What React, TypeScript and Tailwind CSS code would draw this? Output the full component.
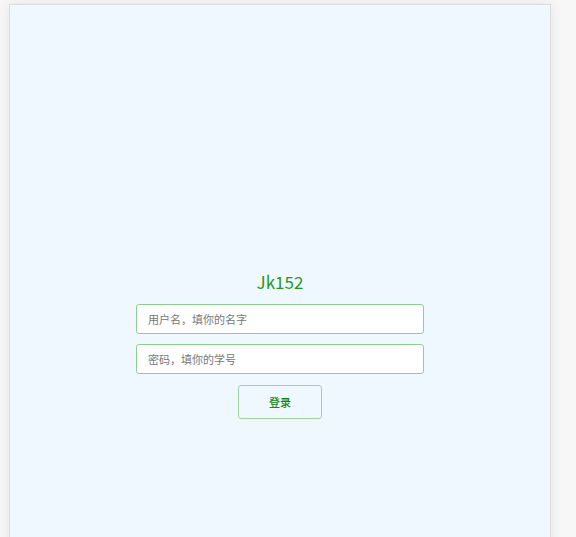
export default function App() {
  return (
    <div
      className="h-[537px] w-full overflow-hidden bg-[#f7f7f7] pt-1"
      style={{ fontFamily: '"Noto Sans CJK SC", "Noto Sans", sans-serif' }}
    >
      <div className="ml-[9px] h-[560px] w-[542px] border border-[#dcdcdc] bg-[#eff7ff] shadow-[0_0_12px_rgba(0,0,0,0.08)]">
        {/* 登录表单 */}
        <div className="flex flex-col items-center pt-[265px]">
          <h1 className="h-6 text-[17px] leading-6 text-[#1f9a1f]">Jk152</h1>
          <input
            type="text"
            placeholder="用户名，填你的名字"
            className="mt-[10px] h-[30px] w-[288px] rounded-[3px] border border-[#8fcf8f] bg-white px-[11px] text-[11px] text-gray-700 placeholder:text-[#777] outline-none"
          />
          <input
            type="password"
            placeholder="密码，填你的学号"
            className="mt-[10px] h-[30px] w-[288px] rounded-[3px] border border-[#8fcf8f] bg-white px-[11px] text-[11px] text-gray-700 placeholder:text-[#777] outline-none"
          />
          <button className="mt-[11px] h-[34px] w-[84px] rounded-[3px] border border-[#9fd69f] bg-transparent text-[11px] font-medium text-[#118811]">
            登录
          </button>
        </div>
      </div>
    </div>
  );
}
